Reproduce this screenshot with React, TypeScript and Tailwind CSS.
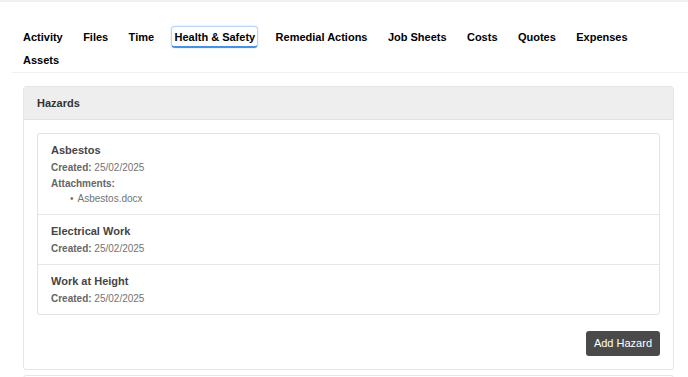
import React from 'react';

const tabs = [
  'Activity',
  'Files',
  'Time',
  'Health & Safety',
  'Remedial Actions',
  'Job Sheets',
  'Costs',
  'Quotes',
  'Expenses',
  'Assets',
];

type Hazard = {
  name: string;
  created: string;
  attachments?: string[];
};

const hazards: Hazard[] = [
  { name: 'Asbestos', created: '25/02/2025', attachments: ['Asbestos.docx'] },
  { name: 'Electrical Work', created: '25/02/2025' },
  { name: 'Work at Height', created: '25/02/2025' },
];

const App: React.FC = () => {
  const active = 'Health & Safety';

  return (
    <div className="min-h-screen bg-white font-['Liberation_Sans',Arial,sans-serif] overflow-hidden">
      <div className="h-[2px] bg-[#eef0f4]" />

      {/* tabs */}
      <div className="ml-[12px] pl-[8px] pr-[30px] pt-[24px] pb-[1px] border-b border-[#f0f0f0]">
        <div className="flex flex-wrap gap-x-[14.4px] gap-y-[1px]">
          {tabs.map((t) => (
            <button
              key={t}
              className={
                t === active
                  ? 'h-[22px] px-[2px] text-[11px] leading-[16px] font-bold text-black border border-b-2 border-[#b9d3f3] border-b-[#4a90e2] rounded-[4px] shadow-[0_0_2px_rgba(74,144,226,0.35)]'
                  : 'h-[22px] px-[2px] text-[11px] leading-[16px] font-bold text-black border border-b-2 border-transparent'
              }
            >
              {t}
            </button>
          ))}
        </div>
      </div>

      {/* hazards card */}
      <div className="mt-[13px] ml-[23px] mr-[14px] border border-[#e6e6e6] rounded-[3px]">
        <div className="h-[33px] flex items-center px-[13px] bg-[#eeeeee] border-b border-[#e2e2e2]">
          <span className="text-[11px] font-bold text-[#333333]">Hazards</span>
        </div>
        <div className="px-[13px] pt-[13px] pb-[13px]">
          <div className="border border-[#e3e3e3] rounded-[3px]">
            {hazards.map((h, i) => (
              <div
                key={h.name}
                className={
                  i === 0
                    ? 'px-[13px] pt-[9px] pb-[8px]'
                    : 'px-[13px] pt-[9px] pb-[8px] border-t border-[#e6e6e6]'
                }
              >
                <div className="text-[11px] leading-[14px] font-bold text-[#454545]">
                  {h.name}
                </div>
                <div className="mt-[4px] text-[10px] leading-[14px] text-[#737373]">
                  <span className="font-bold text-[#666666]">Created:</span> {h.created}
                </div>
                {h.attachments && (
                  <>
                    <div className="mt-[2px] text-[10px] leading-[14px] font-bold text-[#666666]">
                      Attachments:
                    </div>
                    <ul className="mt-[1px] pl-[19px] list-none text-[10px] leading-[14px] text-[#737373]">
                      {h.attachments.map((a) => (
                        <li key={a}>
                          <span className="mr-[4px]">•</span>
                          {a}
                        </li>
                      ))}
                    </ul>
                  </>
                )}
              </div>
            ))}
          </div>
          <div className="mt-[16px] flex justify-end">
            <button className="h-[25px] px-[8px] rounded-[3px] bg-[#4a4a4a] text-white text-[11px]">
              Add Hazard
            </button>
          </div>
        </div>
      </div>

      {/* next card, cut off */}
      <div className="mt-[5px] ml-[23px] mr-[14px] h-[40px] border border-[#e6e6e6] rounded-[3px]" />
    </div>
  );
};

export default App;
